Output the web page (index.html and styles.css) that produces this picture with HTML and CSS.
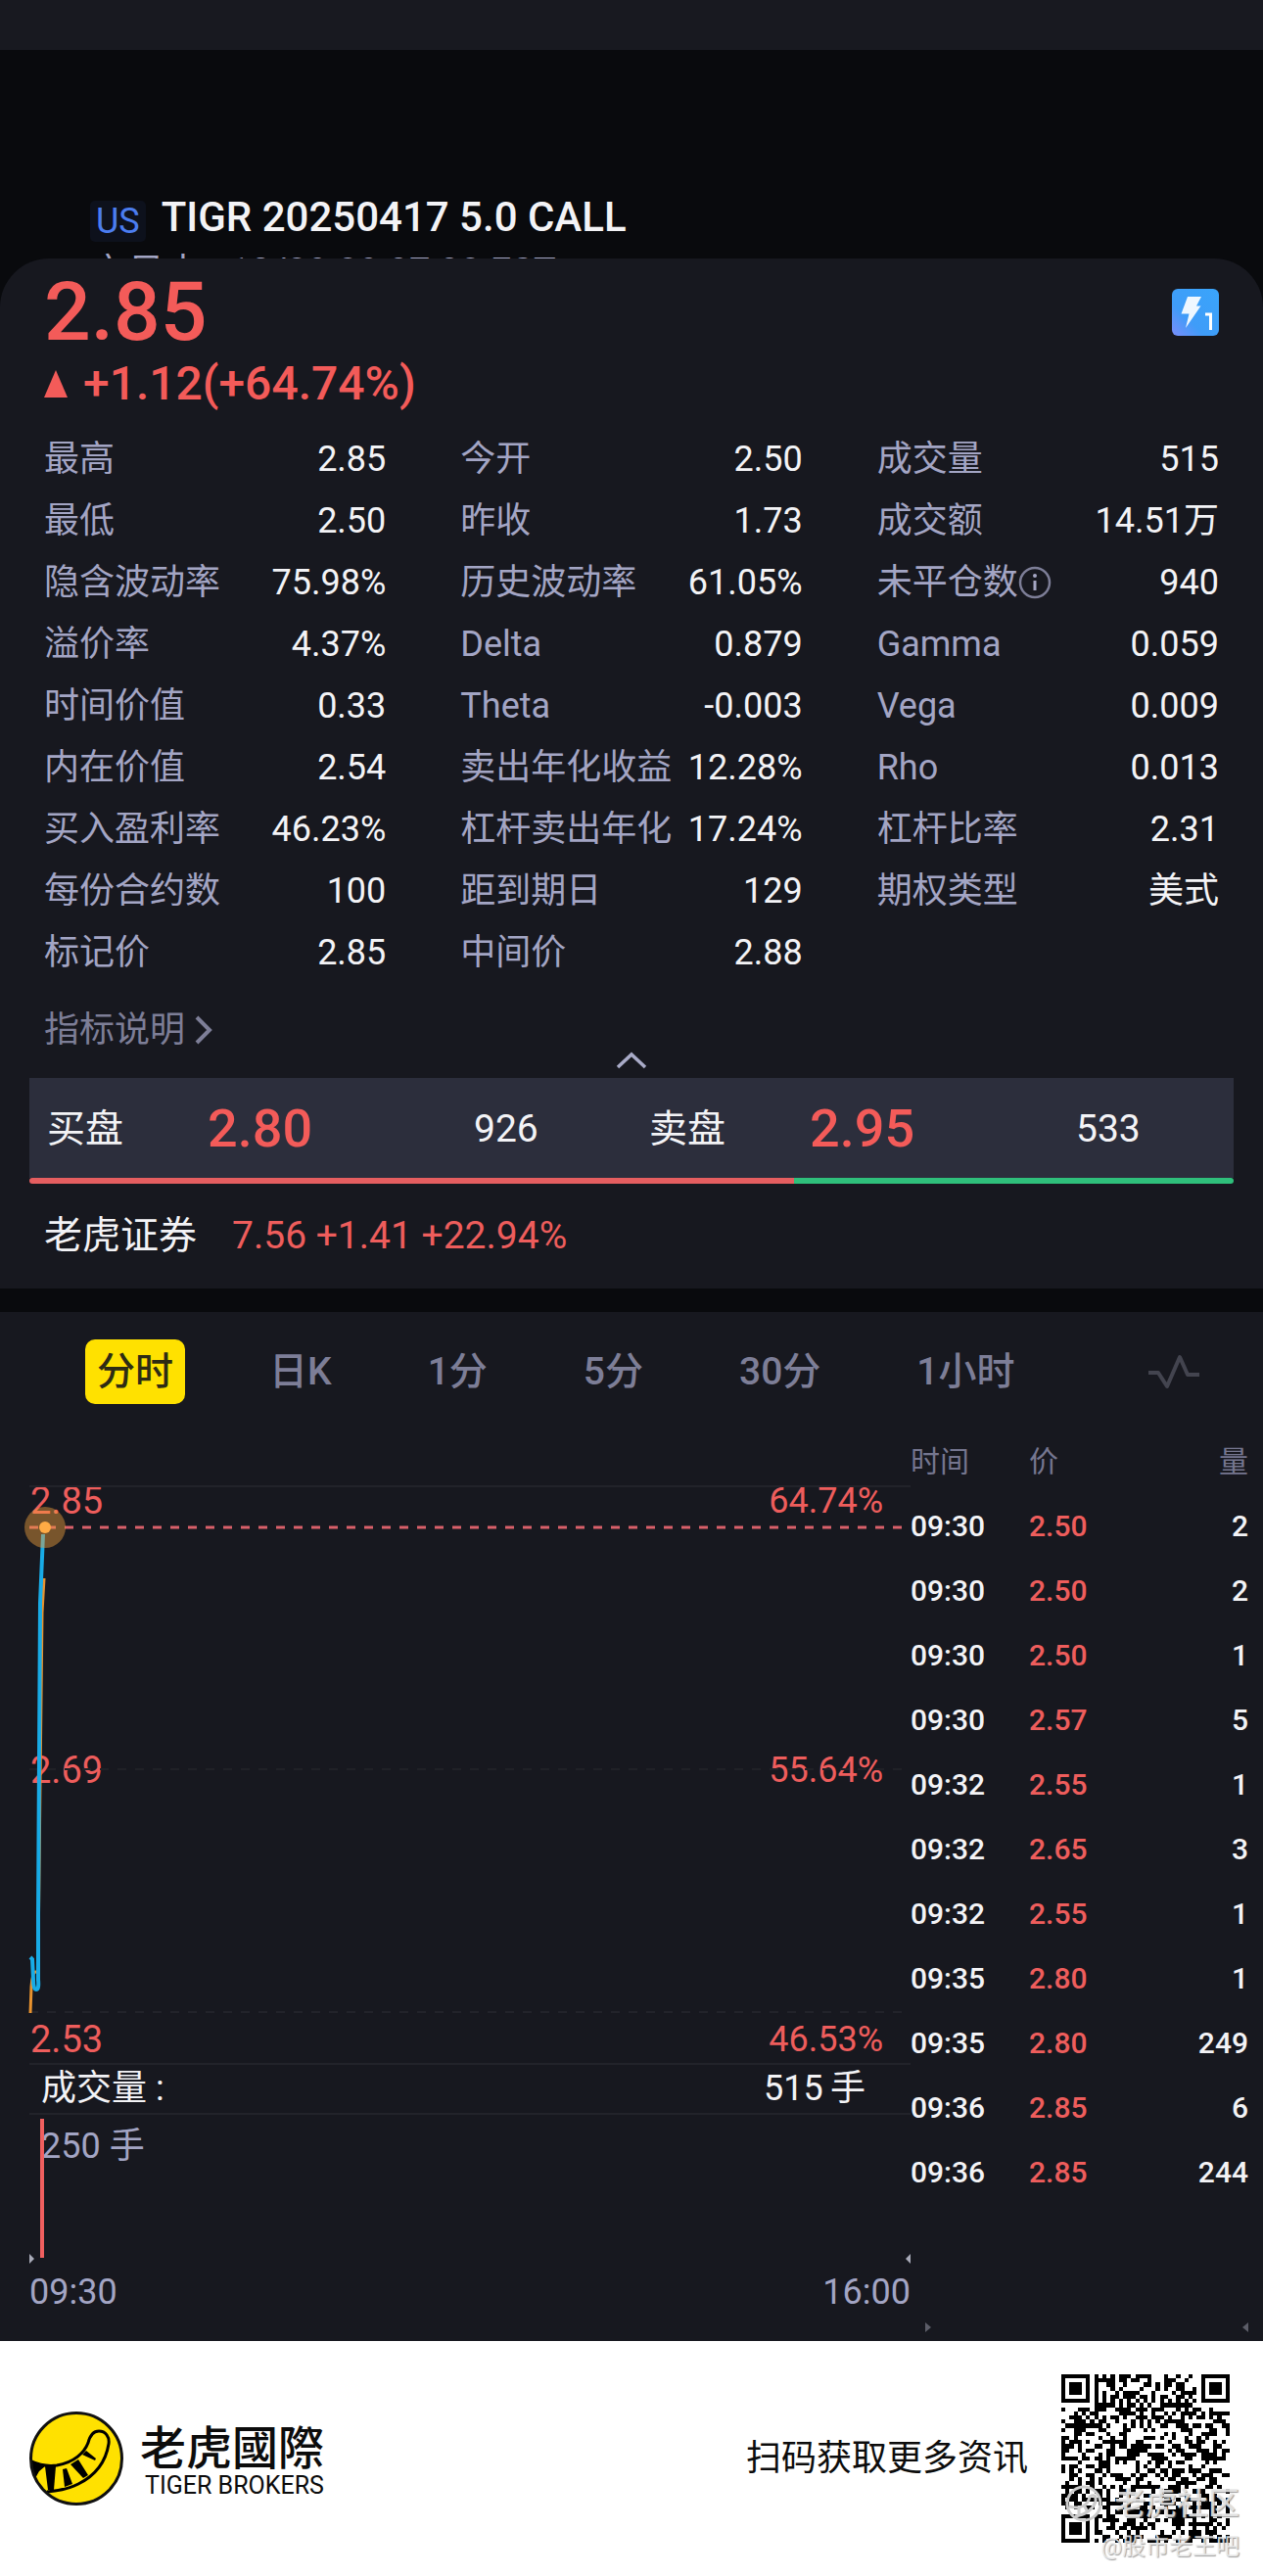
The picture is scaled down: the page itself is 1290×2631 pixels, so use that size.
FILE: index.html
```html
<!DOCTYPE html>
<html lang="zh-CN">
<head>
<meta charset="utf-8">
<meta name="viewport" content="width=device-width, initial-scale=1">
<title>TIGR 20250417 5.0 CALL</title>
<link rel="stylesheet" href="styles.css">
</head>
<body>
<div class="status-bar"></div>
<header class="header">
  <div class="title-row">
    <span class="market">US</span>
    <h1 class="title">TIGR 20250417 5.0 CALL</h1>
  </div>
  <p class="session">交易中&nbsp;&nbsp; 12/09 09:37:30 EST</p>
</header>

<main>
<section class="quote">
  <div class="price-row">
    <strong class="price">2.85</strong>
    <button class="flash" type="button" aria-label="Level 1">
      <svg width="48" height="48" viewBox="0 0 48 48">
        <defs><linearGradient id="flash-bg" x1="0" y1="1" x2="1" y2="0"><stop offset="0" stop-color="#7a8dfb"/><stop offset=".35" stop-color="#3f9cf8"/><stop offset="1" stop-color="#3aa5fb"/></linearGradient></defs>
        <rect width="48" height="48" rx="6" fill="url(#flash-bg)"/>
        <path d="M16 8H30L25 17.500H29.500L14 40L17.500 25.500H9.500Z" fill="#eef7ff"/>
        <path d="M34 26H39.500V42" fill="none" stroke="#fff" stroke-width="3"/>
      </svg>
    </button>
  </div>
  <p class="change">
    <svg width="24" height="28" viewBox="0 0 24 28"><path d="M12 0L24 28H0Z" fill="#f35b59"/></svg>
    <span>+1.12(+64.74%)</span>
  </p>
  <dl class="stats">
    <div><dt>最高</dt><dd>2.85</dd></div><div><dt>今开</dt><dd>2.50</dd></div><div><dt>成交量</dt><dd>515</dd></div>
    <div><dt>最低</dt><dd>2.50</dd></div><div><dt>昨收</dt><dd>1.73</dd></div><div><dt>成交额</dt><dd>14.51万</dd></div>
    <div><dt>隐含波动率</dt><dd>75.98%</dd></div><div><dt>历史波动率</dt><dd>61.05%</dd></div>
    <div><dt>未平仓数<svg class="info" width="34" height="34" viewBox="0 0 34 34"><circle cx="17" cy="17" r="15" fill="none" stroke="#7d7e97" stroke-width="2.500"/><circle cx="17" cy="10" r="2" fill="#a5a6c3"/><path d="M17 15V25" stroke="#a5a6c3" stroke-width="3"/></svg></dt><dd>940</dd></div>
    <div><dt>溢价率</dt><dd>4.37%</dd></div><div><dt>Delta</dt><dd>0.879</dd></div><div><dt>Gamma</dt><dd>0.059</dd></div>
    <div><dt>时间价值</dt><dd>0.33</dd></div><div><dt>Theta</dt><dd>-0.003</dd></div><div><dt>Vega</dt><dd>0.009</dd></div>
    <div><dt>内在价值</dt><dd>2.54</dd></div><div><dt>卖出年化收益</dt><dd>12.28%</dd></div><div><dt>Rho</dt><dd>0.013</dd></div>
    <div><dt>买入盈利率</dt><dd>46.23%</dd></div><div><dt>杠杆卖出年化</dt><dd>17.24%</dd></div><div><dt>杠杆比率</dt><dd>2.31</dd></div>
    <div><dt>每份合约数</dt><dd>100</dd></div><div><dt>距到期日</dt><dd>129</dd></div><div><dt>期权类型</dt><dd>美式</dd></div>
    <div><dt>标记价</dt><dd>2.85</dd></div><div><dt>中间价</dt><dd>2.88</dd></div>
  </dl>
  <a class="explain" href="#explain">指标说明<svg width="18" height="30" viewBox="0 0 18 30"><path d="M2 2L15 15L2 28" fill="none" stroke="#7d7e97" stroke-width="4"/></svg></a>
  <button class="collapse" type="button" aria-label="收起">
    <svg width="32" height="18" viewBox="0 0 32 18"><path d="M2 16L16 3L30 16" fill="none" stroke="#a9abc8" stroke-width="3.500"/></svg>
  </button>
  <div class="book">
    <div class="side"><span class="side-name">买盘</span><strong>2.80</strong><span>926</span></div>
    <div class="side"><span class="side-name">卖盘</span><strong>2.95</strong><span>533</span></div>
  </div>
  <div class="ratio"><i class="ratio-bid" style="width:63.5%"></i><i class="ratio-ask"></i></div>
  <p class="stock"><span>老虎证券</span><span class="up">7.56 +1.41 +22.94%</span></p>
</section>

<section class="market-data">
  <nav class="tabs">
    <button class="tab active" type="button">分时</button>
    <button class="tab" type="button">日K</button>
    <button class="tab" type="button">1分</button>
    <button class="tab" type="button">5分</button>
    <button class="tab" type="button">30分</button>
    <button class="tab" type="button">1小时</button>
    <button class="indicator" type="button" aria-label="指标">
      <svg width="54" height="38" viewBox="0 0 54 38"><path d="M1 20H11L20 34L33 4L41 22H53" fill="none" stroke="#43444f" stroke-width="4" stroke-linejoin="round"/></svg>
    </button>
  </nav>
  <div class="columns">
    <div class="chart">
      <div class="plot">
        <svg class="lines" width="100%" height="100%">
          <line x1="0" y1="1" x2="100%" y2="1" stroke="#22232a" stroke-width="2"/>
          <line x1="0" y1="290" x2="100%" y2="290" stroke="#202127" stroke-width="2" stroke-dasharray="9 9"/>
          <line x1="0" y1="538" x2="100%" y2="538" stroke="#22232a" stroke-width="2" stroke-dasharray="9 9"/>
          <path d="M1 539L2 512Q3 498 6 497H9V480L13 130L15 95" fill="none" stroke="#e8922e" stroke-width="3"/>
          <path d="M1 482L3 484L4 505Q4 515 7 515Q10 515 9 505V440L11 120L14 50" fill="none" stroke="#18abe6" stroke-width="4"/>
        </svg>
        <div class="scale"><span class="level">2.85</span><span>64.74%</span></div>
        <div class="scale"><span class="level">2.69</span><span>55.64%</span></div>
        <div class="scale"><span class="level">2.53</span><span>46.53%</span></div>
        <svg class="lines" width="100%" height="100%">
          <line x1="0" y1="43" x2="100%" y2="43" stroke="#d9606a" stroke-width="3" stroke-dasharray="9 9"/>
          <circle cx="16" cy="43" r="21" fill="#f0a03c" fill-opacity=".45"/>
          <circle cx="16" cy="43" r="6" fill="#ffab45"/>
        </svg>
      </div>
      <div class="volume-head"><span>成交量 :</span><span>515&thinsp;手</span></div>
      <div class="volume">
        <svg class="lines" width="100%" height="100%"><rect x="11" y="4" width="4" height="142" fill="#f05f5f"/></svg>
        <span class="volume-max">250 手</span>
        <div class="ticks">
          <svg width="5" height="10" viewBox="0 0 5 10"><path d="M0 0L5 5L0 10Z" fill="#a9abb9"/></svg>
          <svg width="5" height="10" viewBox="0 0 5 10"><path d="M5 0L0 5L5 10Z" fill="#a9abb9"/></svg>
        </div>
      </div>
      <div class="axis"><span>09:30</span><span>16:00</span></div>
    </div>
    <div class="trades-panel">
      <table class="trades">
        <thead><tr><th>时间</th><th>价</th><th>量</th></tr></thead>
        <tbody>
          <tr><td>09:30</td><td>2.50</td><td>2</td></tr>
          <tr><td>09:30</td><td>2.50</td><td>2</td></tr>
          <tr><td>09:30</td><td>2.50</td><td>1</td></tr>
          <tr><td>09:30</td><td>2.57</td><td>5</td></tr>
          <tr><td>09:32</td><td>2.55</td><td>1</td></tr>
          <tr><td>09:32</td><td>2.65</td><td>3</td></tr>
          <tr><td>09:32</td><td>2.55</td><td>1</td></tr>
          <tr><td>09:35</td><td>2.80</td><td>1</td></tr>
          <tr><td>09:35</td><td>2.80</td><td>249</td></tr>
          <tr><td>09:36</td><td>2.85</td><td>6</td></tr>
          <tr><td>09:36</td><td>2.85</td><td>244</td></tr>
        </tbody>
      </table>
      <div class="ticks list-ticks">
        <svg width="6" height="10" viewBox="0 0 6 10"><path d="M0 0L6 5L0 10Z" fill="#5c5d68"/></svg>
        <svg width="6" height="10" viewBox="0 0 6 10"><path d="M6 0L0 5L6 10Z" fill="#5c5d68"/></svg>
      </div>
    </div>
  </div>
</section>
</main>

<footer class="footer">
  <svg class="logo" width="96" height="96" viewBox="0 0 96 96">
    <defs><clipPath id="disc"><circle cx="48" cy="48" r="46"/></clipPath></defs>
    <circle cx="48" cy="48" r="46" fill="#ffe100"/>
    <g clip-path="url(#disc)">
      <path d="M0 50C12 56 20 56 28 55C46 52 56 42 60 32C62 24 66 20 71 20C78 20 82 26 81 33C78 52 66 66 50 74C40 79 30 81 18 82" fill="none" stroke="#000" stroke-width="3"/>
      <path d="M1 50L16 56L10 61L5 70Z"/>
      <path d="M16 56H27L25 80H19Z"/>
      <path d="M34 59L38 58L44 74L36 77Z"/>
      <path d="M42 54L50 49L60 65L55 68Z"/>
      <path d="M54 44L58 40L68 48L67 50Z"/>
    </g>
    <circle cx="48" cy="48" r="46.500" fill="none" stroke="#111" stroke-width="3"/>
  </svg>
  <div class="brand"><strong>老虎國際</strong><span>TIGER BROKERS</span></div>
  <p class="scan">扫码获取更多资讯</p>
  <div class="qr">
    <svg id="qr" width="172" height="172" viewBox="0 0 41 41" shape-rendering="crispEdges" role="img" aria-label="二维码"></svg>
    <div class="watermark">
      <span class="mark-brand"><svg width="38" height="38" viewBox="0 0 38 38"><circle cx="19" cy="19" r="17" fill="none" stroke="#ccc" stroke-width="3"/><path d="M4 22Q22 26 25 12Q32 8 31 17Q26 30 10 32M14 24V30M20 22L23 28" fill="none" stroke="#ccc" stroke-width="3"/></svg>老虎社区</span>
      <span class="mark-user">@股市老王吧</span>
    </div>
  </div>
</footer>
<script src="qr.js"></script>
</body>
</html>
```
FILE: styles.css
```css
* { box-sizing: border-box; }
body, h1, p, dl, dd { margin: 0; }
body {
  background: #090a0d;
  color: #f3f3f6;
  font: 400 36px/48px Roboto, "Noto Sans CJK SC", sans-serif;
}
button {
  padding: 0;
  border: 0;
  background: none;
  color: inherit;
  font: inherit;
}
svg { display: block; flex: none; }

.status-bar { height: 51px; background: #181920; }

.header {
  height: 213px;
  padding: 146px 92px 0;
  overflow: hidden;
}
.title-row { display: flex; align-items: center; gap: 16px; }
.market {
  margin-top: 7px;
  padding: 0 6px;
  border-radius: 5px;
  background: #0d111c;
  color: #4b7df0;
  line-height: 42px;
}
.title { font-size: 42px; font-weight: 500; line-height: 50px; }
.session { margin-top: 7px; color: #a3a5c4; font-size: 38px; }

.quote {
  padding: 0 45px 30px;
  border-radius: 50px 50px 0 0;
  background: #17181f;
}
.price-row {
  display: flex;
  align-items: center;
  justify-content: space-between;
  height: 104px;
  padding-top: 6px;
}
.price { color: #f35b59; font-size: 84px; font-weight: 500; line-height: 96px; }
.change {
  display: flex;
  align-items: center;
  gap: 16px;
  height: 48px;
  color: #f35b59;
  font-size: 48px;
  font-weight: 500;
}
.stats {
  display: grid;
  grid-template-columns: repeat(3, 1fr);
  column-gap: 76px;
  padding-top: 21px;
}
.stats div {
  display: flex;
  align-items: center;
  justify-content: space-between;
  height: 63px;
  white-space: nowrap;
}
.stats dt { display: flex; align-items: center; color: #a3a5c4; }
.explain {
  display: flex;
  align-items: center;
  gap: 10px;
  width: max-content;
  margin-top: 24px;
  color: #7d7e97;
  text-decoration: none;
}
.collapse { display: block; margin: -2px auto 9px; }

.book {
  display: grid;
  grid-template-columns: 1fr 1fr;
  height: 102px;
  margin: 0 -15px;
  background: #2c2e3c;
}
.side {
  display: grid;
  grid-template-columns: 164px 272px 1fr;
  align-items: center;
  padding: 2px 0 0 18px;
  font-size: 39px;
}
.side strong { color: #f35b59; font-size: 54px; font-weight: 500; }
.ratio { display: flex; height: 6px; margin: 0 -15px; border-radius: 3px; overflow: hidden; }
.ratio-bid { background: #e55e60; }
.ratio-ask { flex: 1; background: #2fbf7b; }
.stock {
  display: flex;
  gap: 36px;
  margin-top: 29px;
  font-size: 39px;
}
.up { color: #ee5d5c; }

.market-data { margin-top: 24px; background: #17181f; }
.tabs {
  display: flex;
  align-items: center;
  gap: 74px;
  padding: 28px 64px 0 87px;
}
.tab {
  padding: 0 12px;
  border-radius: 10px;
  color: #7d7e97;
  font-size: 39px;
  font-weight: 500;
  line-height: 66px;
  white-space: nowrap;
}
.tab.active { background: #ffe100; color: #2e2c14; }
.indicator { margin-left: auto; }

.columns {
  display: grid;
  grid-template-columns: 900fr 345fr;
  padding: 31px 15px 0 30px;
}
.chart { padding-top: 52px; }
.plot {
  position: relative;
  display: flex;
  flex-direction: column;
  justify-content: space-between;
  height: 590px;
  padding-bottom: 8px;
}
.lines { position: absolute; inset: 0; overflow: visible; }
.scale {
  display: flex;
  justify-content: space-between;
  padding: 0 28px 0 1px;
  color: #ee5d5c;
  line-height: 32px;
}
.level { font-size: 38px; }
.volume-head {
  display: flex;
  justify-content: space-between;
  height: 53px;
  padding: 0 46px 0 12px;
  border: solid #22232a;
  border-width: 2px 0;
}
.volume { position: relative; height: 152px; padding-top: 8px; }
.volume-max { padding-left: 12px; color: #a3a5c4; }
.ticks { display: flex; justify-content: space-between; }
.volume .ticks { padding-top: 86px; }
.axis {
  display: flex;
  justify-content: space-between;
  padding: 5px 0 26px;
  color: #a3a5c4;
}

.trades-panel { display: flex; flex-direction: column; justify-content: space-between; }
.trades {
  width: 100%;
  border-collapse: collapse;
  table-layout: fixed;
  font-size: 30px;
  font-weight: 500;
}
.trades th { height: 61px; padding: 0 0 5px; color: #75768f; font-weight: 400; text-align: left; }
.trades th:first-child { width: 121px; }
.trades td { height: 66px; padding: 0; }
.trades td:nth-child(2) { color: #ee5d5c; }
.trades th:last-child, .trades td:last-child { text-align: right; }
.list-ticks { padding: 0 0 9px 15px; }

.footer {
  display: flex;
  align-items: center;
  height: 240px;
  padding: 0 34px 0 30px;
  background: #fff;
  color: #0c0c0c;
}
.brand { display: flex; flex-direction: column; margin-left: 17px; }
.brand strong { font: 500 47px/56px "Noto Sans CJK TC", sans-serif; }
.brand span { padding-left: 5px; font-size: 25px; line-height: 28px; }
.scan { margin-left: auto; }
.qr { position: relative; margin-left: 34px; }
.watermark {
  position: absolute;
  top: 110px;
  right: -10px;
  display: flex;
  flex-direction: column;
  align-items: flex-end;
  color: rgba(236, 236, 236, .85);
  text-shadow: 1px 1px 1px rgba(120, 120, 120, .7);
  white-space: nowrap;
}
.mark-brand { display: flex; align-items: center; gap: 12px; font-size: 32px; font-weight: 500; line-height: 44px; }
.mark-user { font-size: 24px; line-height: 44px; }
```
FILE: qr.js
```js
// Draws a 41-module code: finder, alignment and timing patterns, then the data area.
const SIZE = 41;
const finders = [[0, 0], [SIZE - 7, 0], [0, SIZE - 7]];

function ring(dx, dy, radius) {
  return Math.max(Math.abs(dx), Math.abs(dy)) !== radius;
}

let seed = 20250417;
function dataBit() {
  seed = (Math.imul(seed, 1664525) + 1013904223) >>> 0;
  return seed / 4294967296 < 0.5;
}

function isDark(x, y) {
  const bit = dataBit();
  for (const [fx, fy] of finders) {
    const dx = x - fx - 3;
    const dy = y - fy - 3;
    if (Math.abs(dx) <= 4 && Math.abs(dy) <= 4) {
      return ring(dx, dy, 2) && ring(dx, dy, 4);
    }
  }
  if (Math.abs(x - 34) <= 2 && Math.abs(y - 34) <= 2) return ring(x - 34, y - 34, 1);
  if (x === 6) return y % 2 === 0;
  if (y === 6) return x % 2 === 0;
  return bit;
}

let d = "";
for (let y = 0; y < SIZE; y++) {
  for (let x = 0; x < SIZE; x++) {
    if (isDark(x, y)) d += `M${x} ${y}h1v1h-1z`;
  }
}
const path = document.createElementNS("http://www.w3.org/2000/svg", "path");
path.setAttribute("d", d);
document.getElementById("qr").append(path);
```
